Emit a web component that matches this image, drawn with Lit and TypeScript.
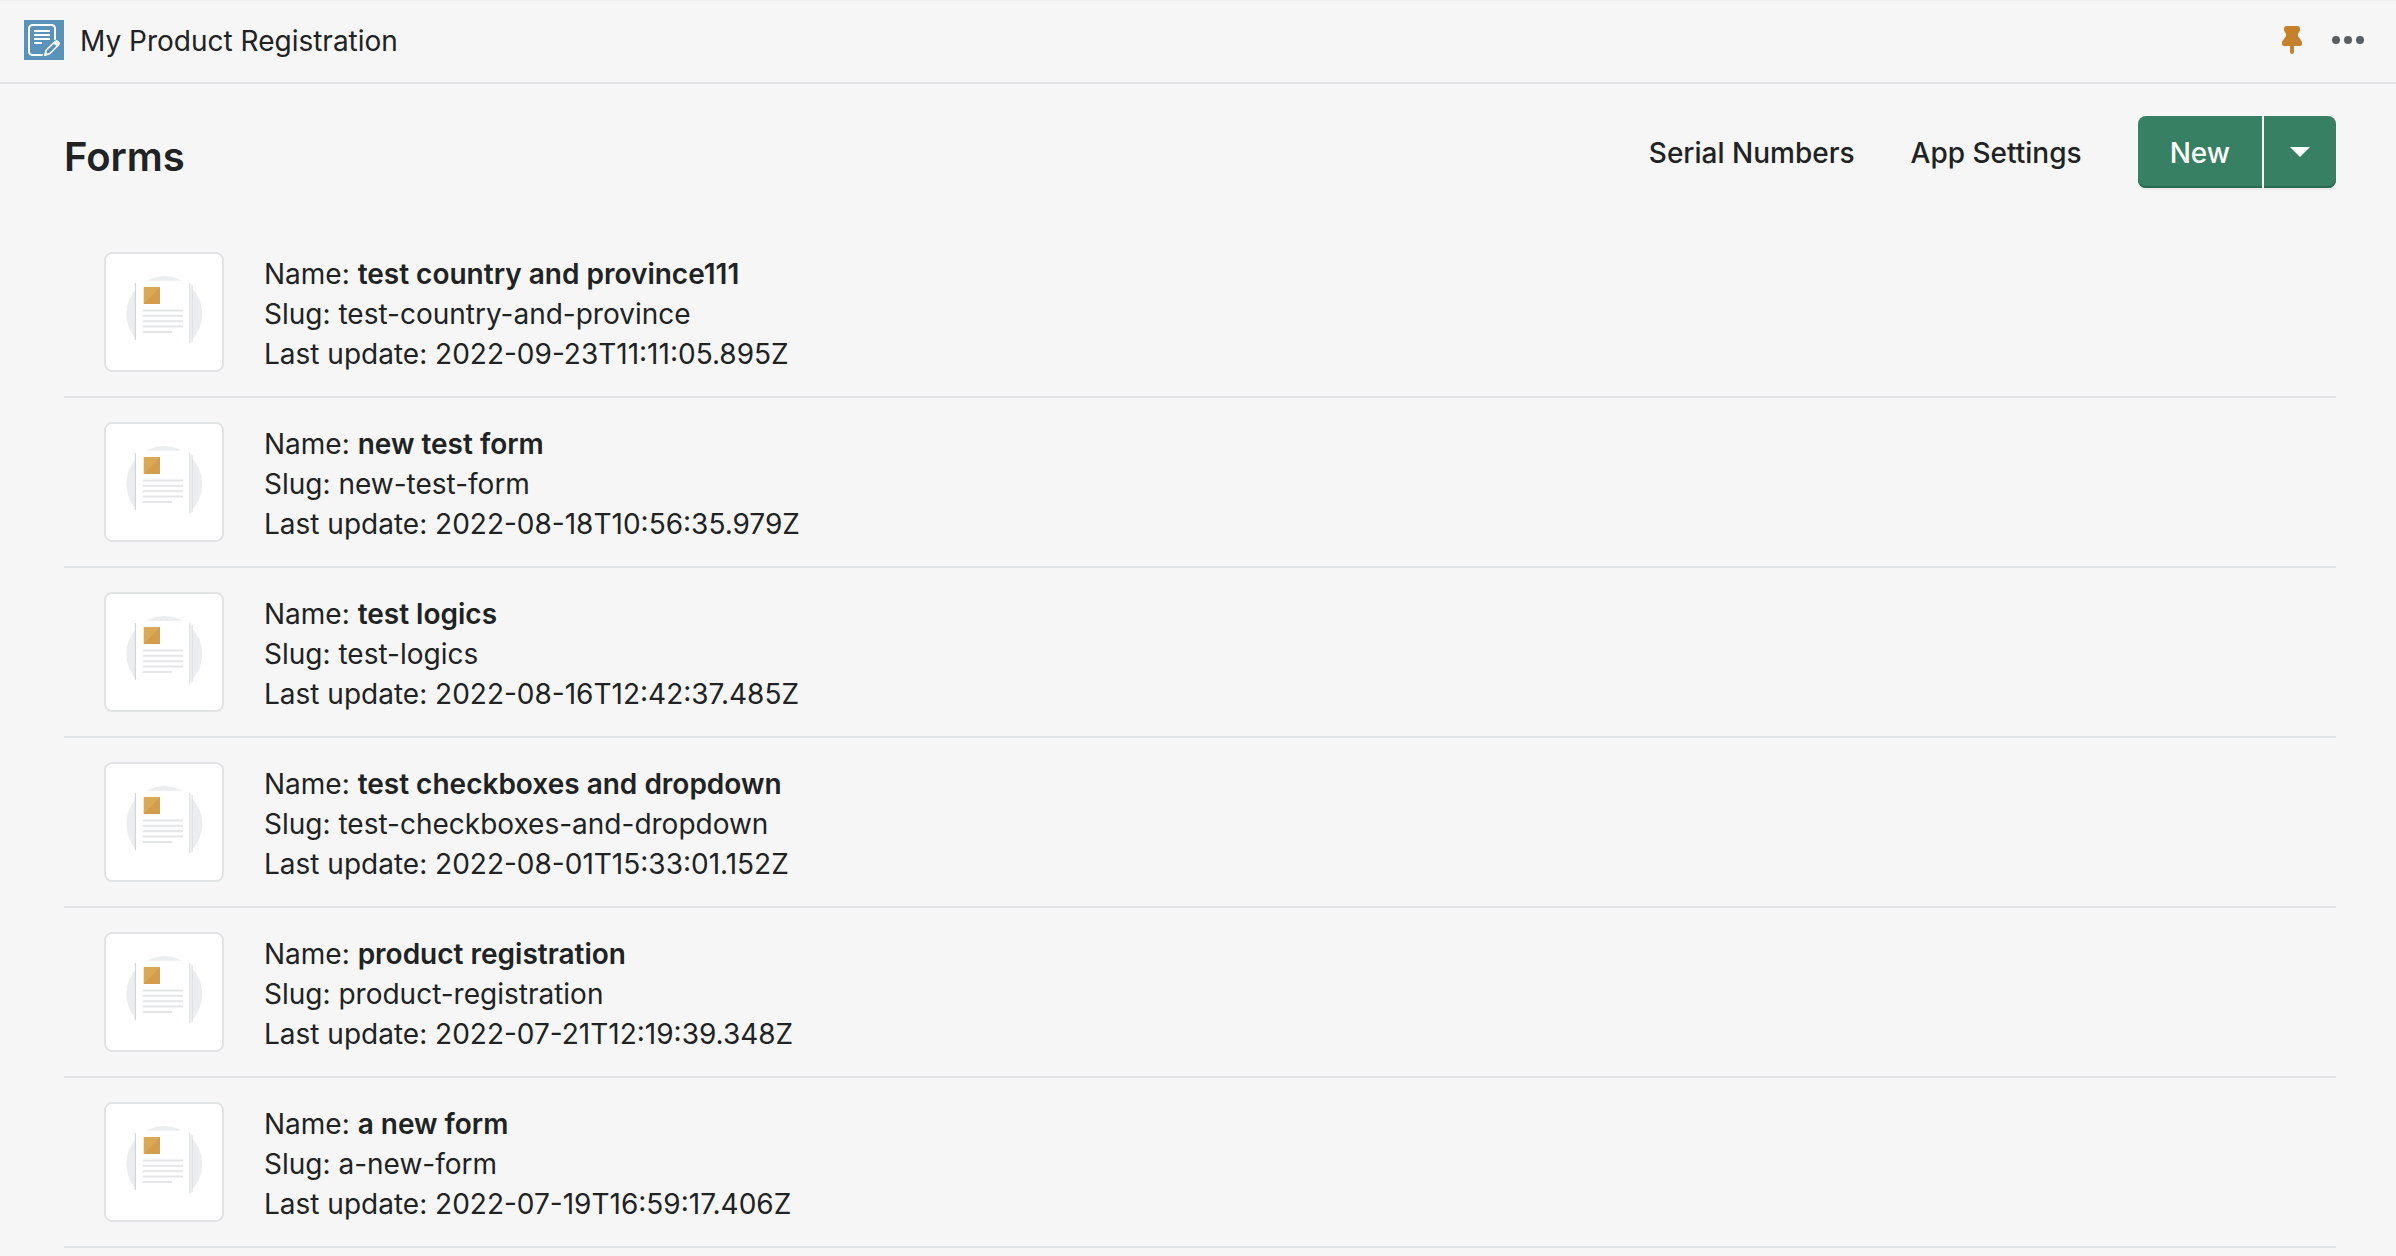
import { LitElement, html, css, svg } from "lit";
import { customElement, property, state } from "lit/decorators.js";

interface FormEntry {
  name: string;
  slug: string;
  updated: string;
}

const FORMS: FormEntry[] = [
  { name: "test country and province111", slug: "test-country-and-province", updated: "2022-09-23T11:11:05.895Z" },
  { name: "new test form", slug: "new-test-form", updated: "2022-08-18T10:56:35.979Z" },
  { name: "test logics", slug: "test-logics", updated: "2022-08-16T12:42:37.485Z" },
  { name: "test checkboxes and dropdown", slug: "test-checkboxes-and-dropdown", updated: "2022-08-01T15:33:01.152Z" },
  { name: "product registration", slug: "product-registration", updated: "2022-07-21T12:19:39.348Z" },
  { name: "a new form", slug: "a-new-form", updated: "2022-07-19T16:59:17.406Z" },
];

@customElement("form-row")
export class FormRow extends LitElement {
  static styles = css`
    :host {
      display: block;
      border-bottom: 2px solid #e1e3e5;
    }
    .link {
      display: flex;
      align-items: flex-start;
      gap: 40px;
      padding: 24px 40px 22px;
      color: inherit;
      text-decoration: none;
    }
    .thumb {
      box-sizing: border-box;
      flex: none;
      width: 120px;
      height: 120px;
      border: 2px solid #e1e3e5;
      border-radius: 8px;
      background: #ffffff;
    }
    .thumb svg {
      display: block;
      width: 100%;
      height: 100%;
    }
    .info {
      padding-top: 2px;
    }
    .line {
      margin: 0;
      line-height: 40px;
    }
    .name {
      font-weight: 600;
    }
  `;

  @property({ attribute: false }) entry!: FormEntry;

  render() {
    const { name, slug, updated } = this.entry;
    return html`
      <a class="link" href="#${slug}">
        <span class="thumb">
          <svg viewBox="2 2 116 116" aria-hidden="true">
            <circle cx="60.3" cy="62" r="38" fill="#ecedef" />
            <path d="M85 32h2.800v60H85z" fill="#fafafb" />
            <path d="M87.600 33h1v57h-1z" fill="#d8dadd" />
            <path d="M30.800 31H32v57h-1.200z" fill="#d3d5d8" />
            <path d="M32 28.700h53.300V102H32z" fill="#ffffff" />
            <path d="M85.300 31h1v60h-1z" fill="#d8dadd" />
            <path d="M39.700 35H56v17H39.700z" fill="#daa958" />
            <path d="M56 35v17H39.700z" fill="#d39d4b" />
            <path
              d="M38.700 58.500H79M38.700 63.800H79M38.700 69.200H79M38.700 74.500H79M38.700 80H68"
              stroke="#e4e5e7"
              stroke-width="1.9"
            />
          </svg>
        </span>
        <div class="info">
          <p class="line">Name: <b class="name">${name}</b></p>
          <p class="line">Slug: ${slug}</p>
          <p class="line">Last update: ${updated}</p>
        </div>
      </a>
    `;
  }
}

const appIcon = svg`
  <rect width="40" height="40" fill="#5a93ba" />
  <path d="M31 19V8.500a3.500 3.500 0 0 0-3.500-3.500H8.500A3.500 3.500 0 0 0 5 8.500v23A3.500 3.500 0 0 0 8.500 35H18"
    fill="none" stroke="#ffffff" stroke-width="2" stroke-linecap="round" />
  <path d="M10 11h16M10 15h16M10 19h16M10 23h8" stroke="#ffffff" stroke-width="1.800" />
  <path d="M20.800 35.200l1.400-5.200 9.200-8.600q1.500-1 2.900.4t.3 2.900L25.800 33.800z"
    fill="none" stroke="#ffffff" stroke-width="1.500" stroke-linejoin="round" />
  <path d="M29.500 23l2-1.900q1.600-1 3.200.5t.4 3.300l-2 2z" fill="#ffffff" />
  <path d="M20.500 35.800l1.100-4 2.800 2.800z" fill="#ffffff" />`;

@customElement("app-root")
export class AppRoot extends LitElement {
  static styles = css`
    :host {
      display: block;
      min-height: 100vh;
      background: #f6f6f6;
      color: #202223;
      font-family: Inter, "Liberation Sans", sans-serif;
      font-size: 28px;
      line-height: 40px;
    }
    button {
      margin: 0;
      padding: 0;
      border: 0;
      background: none;
      color: inherit;
      font: inherit;
      cursor: pointer;
    }
    svg {
      display: block;
    }
    .bar {
      display: flex;
      align-items: center;
      gap: 16px;
      padding: 20px 32px 22px 24px;
      border-bottom: 2px solid #e1e3e5;
      box-shadow: inset 0 1px 0 #f0f0f1;
    }
    .app-name {
      flex: 1;
      padding-top: 2px;
      line-height: 38px;
    }
    .tools {
      display: flex;
      align-items: center;
      gap: 30px;
    }
    .pin {
      color: #c5812c;
    }
    .more {
      color: #5c5f62;
    }
    .head {
      display: flex;
      align-items: center;
      justify-content: space-between;
      padding: 32px 60px 40px 64px;
    }
    .title {
      margin: 0;
      padding-top: 10px;
      font-size: 40px;
      line-height: 56px;
      font-weight: 600;
    }
    .actions {
      display: flex;
      align-items: center;
      gap: 56px;
    }
    .action {
      padding-top: 2px;
      color: inherit;
      font-weight: 500;
      text-decoration: none;
    }
    .split {
      display: flex;
      gap: 2px;
    }
    .primary {
      height: 72px;
      background: #388063;
      color: #ffffff;
      font-weight: 500;
      box-shadow: inset 0 -2px 0 #2b6a50, 0 2px 0 #e9eaea;
    }
    .new {
      padding: 2px 32px 0;
      border-radius: 8px 0 0 8px;
    }
    .toggle {
      padding: 0 26px;
      border-radius: 0 8px 8px 0;
    }
    .list {
      margin: 0 60px 0 64px;
      padding: 0;
      list-style: none;
    }
  `;

  @state() private pinned = true;

  render() {
    return html`
      <header class="bar">
        <svg width="40" height="40" viewBox="0 0 40 40" aria-hidden="true">${appIcon}</svg>
        <span class="app-name">My Product Registration</span>
        <div class="tools">
          <button
            class="pin"
            aria-label="Pin app"
            aria-pressed=${this.pinned}
            @click=${() => (this.pinned = !this.pinned)}
          >
            <svg width="20" height="28" viewBox="0 0 20 28" fill="currentColor" aria-hidden="true">
              <path
                d="M4.500 0h11A2.500 2.500 0 0 1 18 2.500V4.500L16 8v2l3.500 5q.5 1 .5 2v1a2 2 0 0 1-2 2h-6v6a2 2 0 0 1-4 0v-6H2a2 2 0 0 1-2-2v-1q0-1 .5-2L4 10V8L2 4.500V2.500A2.500 2.500 0 0 1 4.500 0z"
              />
            </svg>
          </button>
          <button class="more" aria-label="More actions">
            <svg width="32" height="8" viewBox="0 0 32 8" fill="currentColor" aria-hidden="true">
              <circle cx="4" cy="4" r="4" />
              <circle cx="16" cy="4" r="4" />
              <circle cx="28" cy="4" r="4" />
            </svg>
          </button>
        </div>
      </header>
      <main>
        <div class="head">
          <h1 class="title">Forms</h1>
          <nav class="actions" aria-label="Page actions">
            <a class="action" href="#serial-numbers">Serial Numbers</a>
            <a class="action" href="#app-settings">App Settings</a>
            <div class="split">
              <button class="primary new">New</button>
              <button class="primary toggle" aria-label="More ways to create" aria-haspopup="menu">
                <svg width="20" height="10" viewBox="0 0 20 10" aria-hidden="true">
                  <path d="M0 0h20L10 10z" fill="#ffffff" />
                </svg>
              </button>
            </div>
          </nav>
        </div>
        <ul class="list">
          ${FORMS.map((entry) => html`<li><form-row .entry=${entry}></form-row></li>`)}
        </ul>
      </main>
    `;
  }
}
